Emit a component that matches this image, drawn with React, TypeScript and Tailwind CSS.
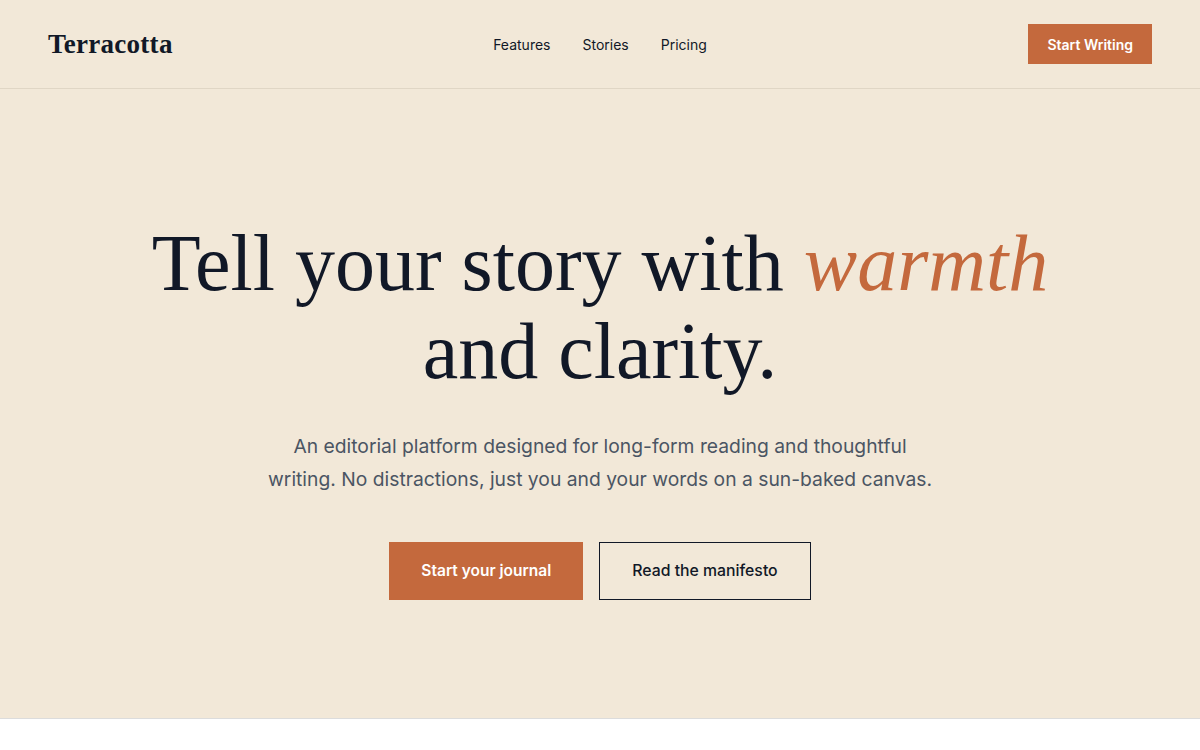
import React from "react";

export default function App() {
  const serif = { fontFamily: 'Georgia, "Liberation Serif", serif' };
  return (
    <div className="w-full bg-white" style={{ fontFamily: 'Inter, "Noto Sans", sans-serif' }}>
      <div className="bg-[#F2E8D8]">
        <header className="flex items-center justify-between px-12 py-6 border-b border-[#E0D6C5]">
          <div className="w-[260px] text-[27px] leading-none font-bold text-[#111827] tracking-[0.01em]" style={serif}>
            Terracotta
          </div>
          <nav className="flex items-center gap-8 text-[14px] text-[#111827]">
            <span>Features</span>
            <span>Stories</span>
            <span>Pricing</span>
          </nav>
          <div className="w-[260px] flex justify-end">
            <button className="h-10 px-[19px] bg-[#C4693D] text-white text-[14px] font-semibold">
              Start Writing
            </button>
          </div>
        </header>
        <section className="flex flex-col items-center pt-[130px] pb-[118px] border-b border-[#DCDCDC] text-center">
          <h1 className="text-[80px] leading-[88px] text-[#111827] font-normal" style={serif}>
            Tell your story with <em className="italic text-[#C4693D]">warmth</em>
            <br />
            and clarity.
          </h1>
          <p className="mt-[35px] max-w-[672px] text-[19.3px] leading-[33px] text-[#4B5563]">
            An editorial platform designed for long-form reading and thoughtful writing. No distractions, just you and your words on a sun-baked canvas.
          </p>
          <div className="mt-[46px] flex gap-4">
            <button className="h-[58px] px-8 bg-[#C4693D] text-white text-[15.5px] font-semibold">
              Start your journal
            </button>
            <button className="h-[58px] px-8 border border-[#111827] text-[#111827] text-[15.8px] font-medium">
              Read the manifesto
            </button>
          </div>
        </section>
      </div>
    </div>
  );
}
